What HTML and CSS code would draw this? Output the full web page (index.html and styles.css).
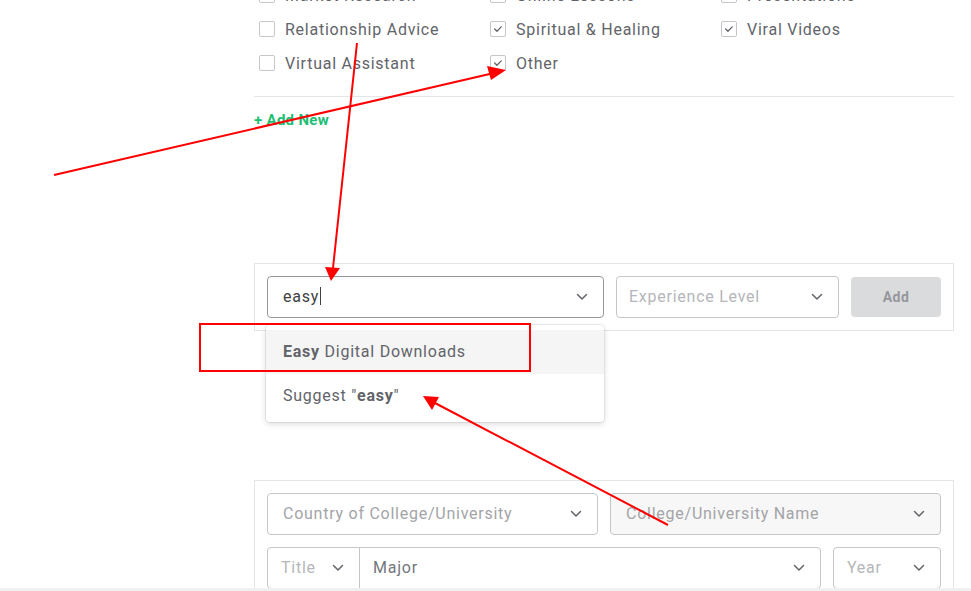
FILE: index.html
```html
<!DOCTYPE html>
<html>
<head>
<meta charset="utf-8">
<link rel="stylesheet" href="styles.css">
</head>
<body>
<div class="page">
  <div class="content">
    <div class="checks">
      <label class="check"><span class="box"></span>Market Research</label>
      <label class="check"><span class="box"></span>Online Lessons</label>
      <label class="check"><span class="box"></span>Presentations</label>
      <label class="check"><span class="box"></span>Relationship Advice</label>
      <label class="check"><span class="box on"><svg viewBox="0 0 16 16"><path d="M4.2 8l2.6 2.5 4.9-4.9"/></svg></span>Spiritual &amp; Healing</label>
      <label class="check"><span class="box on"><svg viewBox="0 0 16 16"><path d="M4.2 8l2.6 2.5 4.9-4.9"/></svg></span>Viral Videos</label>
      <label class="check"><span class="box"></span>Virtual Assistant</label>
      <label class="check"><span class="box on"><svg viewBox="0 0 16 16"><path d="M4.2 8l2.6 2.5 4.9-4.9"/></svg></span>Other</label>
    </div>
    <div class="sep"></div>
    <div class="addnew">+ Add New</div>

    <div class="panel skill">
      <div class="combo">
        <div class="field focus"><span class="val">easy<span class="caret"></span></span><svg class="chev" viewBox="0 0 12 8"><path d="M1.5 1.5l4.5 4.5 4.5-4.5"/></svg></div>
        <div class="menu">
          <div class="opt hl"><b>Easy</b> Digital Downloads</div>
          <div class="opt">Suggest "<b>easy</b>"</div>
        </div>
      </div>
      <div class="field level"><span class="ph">Experience Level</span><svg class="chev" viewBox="0 0 12 8"><path d="M1.5 1.5l4.5 4.5 4.5-4.5"/></svg></div>
      <div class="btn">Add</div>
    </div>

    <div class="panel edu">
      <div class="row">
        <div class="field grow"><span class="ph dark">Country of College/University</span><svg class="chev" viewBox="0 0 12 8"><path d="M1.5 1.5l4.5 4.5 4.5-4.5"/></svg></div>
        <div class="field grow dis"><span class="ph dark">College/University Name</span><svg class="chev" viewBox="0 0 12 8"><path d="M1.5 1.5l4.5 4.5 4.5-4.5"/></svg></div>
      </div>
      <div class="row">
        <div class="joined">
          <div class="field title"><span class="ph">Title</span><svg class="chev" viewBox="0 0 12 8"><path d="M1.5 1.5l4.5 4.5 4.5-4.5"/></svg></div>
          <div class="field major"><span class="val2">Major</span><svg class="chev" viewBox="0 0 12 8"><path d="M1.5 1.5l4.5 4.5 4.5-4.5"/></svg></div>
        </div>
        <div class="field year"><span class="ph">Year</span><svg class="chev" viewBox="0 0 12 8"><path d="M1.5 1.5l4.5 4.5 4.5-4.5"/></svg></div>
      </div>
    </div>
  </div>
  <div class="bottombar"></div>

  <div class="redbox"></div>
  <svg class="arrows" viewBox="0 0 971 591" width="971" height="591">
    <line x1="54" y1="175" x2="494" y2="73"/>
    <polygon points="506,70 491,80 487,66"/>
    <line x1="357" y1="43" x2="333" y2="268"/>
    <polygon points="331,281 325,267 340,268"/>
    <line x1="668" y1="525" x2="435" y2="403"/>
    <polygon points="423,396 439,397 432,410"/>
  </svg>
</div>
</body>
</html>
```

FILE: styles.css
```css
* { box-sizing: border-box; }
html, body { margin: 0; padding: 0; background: #fff; }
body {
  font-family: "Roboto", "Liberation Sans", sans-serif;
  color: #62646a;
  overflow: hidden;
}
.page {
  position: relative;
  width: 971px;
  height: 591px;
  overflow: hidden;
}
.content {
  margin-left: 254px;
  width: 700px;
}
.checks {
  display: grid;
  grid-template-columns: 231px 231px 231px;
  grid-auto-rows: 34px;
  margin-top: -22px;
  padding-left: 5px;
}
.check {
  display: flex;
  align-items: center;
  gap: 10px;
  font-size: 16px;
  letter-spacing: 0.75px;
  color: #62646a;
}
.box {
  width: 16px;
  height: 16px;
  border: 1px solid #c5c6c9;
  border-radius: 2px;
  flex: none;
  display: flex;
}
.box svg { width: 14px; height: 14px; }
.box svg path { fill: none; stroke: #62646a; stroke-width: 1.5; stroke-linecap: round; stroke-linejoin: round; }
.sep {
  margin-top: 16px;
  height: 1px;
  background: #e4e5e7;
}
.addnew {
  margin-top: 15px;
  font-size: 15px;
  font-weight: 700;
  color: #1dbf73;
  line-height: 17px;
  letter-spacing: 0.3px;
}
.panel {
  border: 1px solid #e4e5e7;
  padding: 12px;
}
.skill {
  margin-top: 134px;
  display: flex;
  gap: 12px;
}
.combo { position: relative; width: 337px; }
.field {
  height: 42px;
  border: 1px solid #c5c6c9;
  border-radius: 4px;
  display: flex;
  align-items: center;
  justify-content: space-between;
  padding: 0 15px 2px 15px;
  font-size: 16px;
  letter-spacing: 0.75px;
  background: #fff;
}
.field.focus { border-color: #95979d; }
.val { color: #404145; display: flex; align-items: center; }
.val2 { color: #74767e; }
.caret { display: inline-block; width: 1px; height: 18px; background: #404145; margin-left: 1px; }
.ph { color: #b5b6ba; }
.ph.dark { color: #a3a4a8; }
.level .ph { margin-left: -3px; }
.chev { width: 12px; height: 8px; flex: none; margin-top: 2px; }
.chev path { fill: none; stroke: #62646a; stroke-width: 1.5; stroke-linecap: round; stroke-linejoin: round; }
.menu {
  position: absolute;
  left: -1px;
  top: 49px;
  width: 338px;
  background: #fff;
  border-radius: 4px;
  box-shadow: 0 0 0 1px rgba(0,0,0,0.06), 0 2px 6px rgba(0,0,0,0.15);
  padding: 5px 0 4px;
  z-index: 2;
}
.opt {
  height: 44px;
  display: flex;
  align-items: center;
  padding: 0 0 2px 17px;
  font-size: 16px;
  letter-spacing: 0.75px;
  color: #62646a;
  white-space: pre;
}
.opt b { color: #62646a; font-weight: 700; }
.opt.hl { background: #f5f5f5; }
.level { width: 223px; }
.btn {
  width: 90px;
  height: 40px;
  margin-top: 1px;
  background: #dadbdd;
  border-radius: 4px;
  display: flex;
  align-items: center;
  justify-content: center;
  font-size: 14px;
  font-weight: 700;
  color: #95979d;
  letter-spacing: 0.5px;
}
.edu {
  margin-top: 149px;
  height: 130px;
  border-bottom: none;
  display: flex;
  flex-direction: column;
  gap: 12px;
}
.row { display: flex; gap: 12px; }
.grow { flex: 1; }
.dis { background: #f7f7f7; }
.joined { display: flex; width: 554px; }
.title {
  width: 93px;
  border-radius: 4px 0 0 4px;
  padding-left: 13px;
}
.major {
  flex: 1;
  border-radius: 0 4px 4px 0;
  padding-left: 13px;
  margin-left: -1px;
}
.year { width: 108px; padding-left: 13px; }
.bottombar {
  position: absolute;
  left: 0;
  right: 0;
  bottom: 0;
  height: 3px;
  background: #f0f0f0;
}
.redbox {
  position: absolute;
  left: 199px;
  top: 323px;
  width: 332px;
  height: 49px;
  border: 2px solid #ff0000;
  z-index: 5;
}
.arrows {
  position: absolute;
  left: 0;
  top: 0;
  z-index: 6;
}
.arrows line { stroke: #ff0000; stroke-width: 2; }
.arrows polygon { fill: #ff0000; }
```
